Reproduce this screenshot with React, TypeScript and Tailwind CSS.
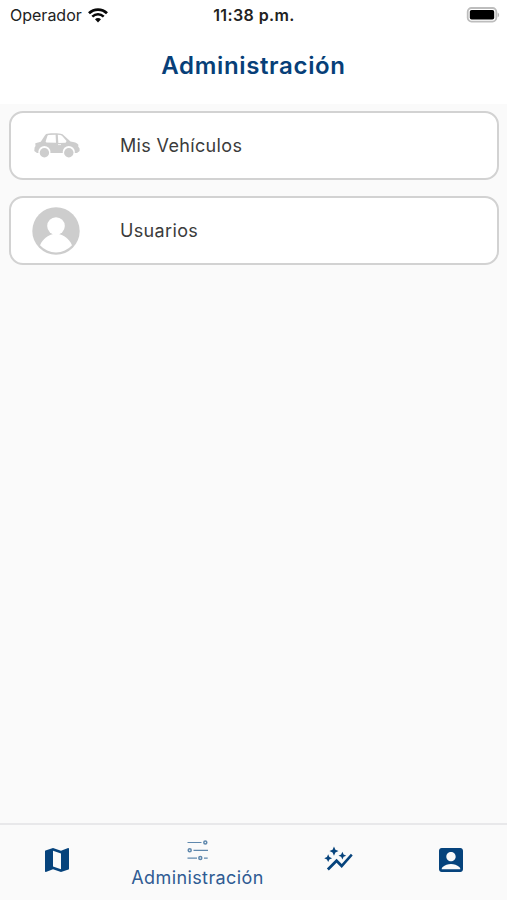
import { MdMap, MdAutoGraph, MdAccountBox } from "react-icons/md";

function WifiIcon() {
  return (
    <svg className="ml-[6px] h-[15px] w-[20px]" viewBox="0 0 20 15" fill="none" stroke="#080808">
      <path d="M1 5.3C6 .3 14 .3 19 5.3" strokeWidth="2.7" />
      <path d="M4.3 8.7c3.3-3.2 8.1-3.2 11.4 0" strokeWidth="2.5" />
      <path d="M10 14.4l-3-3.1c1.7-1.6 4.3-1.6 6 0z" fill="#080808" stroke="none" />
    </svg>
  );
}

function BatteryIcon() {
  return (
    <svg className="h-[16px] w-[34px]" viewBox="0 0 34 16">
      <rect x="1.7" y="1" width="28.6" height="13.6" rx="3.8" fill="#fff" stroke="#bdbdbd" strokeWidth="1.8" />
      <rect x="3.8" y="3" width="24.4" height="9.6" rx="1.8" fill="#000" />
      <path d="M31.6 5.4c2 .8 2 4 0 4.8z" fill="#b9b9b9" />
    </svg>
  );
}

function CarIcon() {
  return (
    <svg className="h-[25px] w-[46px]" viewBox="0 0 46 25">
      <path
        d="M1.3 10.2L6.8 8.8 11.2 2Q12 .8 13.5.7C19 0 25 .1 28.5 1.2L36.5 8.4C40 8.8 43.2 9.7 44.4 11.7L44.2 13.6 45.6 15.5V18L43 20H3L.3 18 .6 14.5 1.5 13z"
        fill="#cdcdcd"
      />
      <path d="M11.6 8.6l1.7-5.4q.3-1 1.3-1.1l7-.3.4 7.9-9.6-.2z" fill="#fff" />
      <path d="M23.8 1.8q2.8 0 4.2.9l4.6 5.2-1 1.9-7.3.2z" fill="#fff" />
      <path d="M24 11.6h3" stroke="#fff" strokeWidth=".8" />
      <circle cx="10.4" cy="19" r="6.1" fill="#fff" />
      <circle cx="34.8" cy="19" r="6.1" fill="#fff" />
      <circle cx="10.4" cy="19.7" r="4.7" fill="#cdcdcd" />
      <circle cx="34.8" cy="19.7" r="4.7" fill="#cdcdcd" />
    </svg>
  );
}

function UserIcon() {
  return (
    <svg className="h-[48px] w-[48px]" viewBox="0 0 48 48">
      <circle cx="24" cy="24" r="23.7" fill="#cdcdcd" />
      <path d="M8 38.3C11 31.5 16.5 28.2 21.3 27.1h5.4C31.5 28.2 37 31.5 40 38.3A21.6 21.6 0 0 1 8 38.3z" fill="#fff" />
      <circle cx="24" cy="19" r="8.8" fill="#fff" />
    </svg>
  );
}

function SlidersIcon() {
  return (
    <svg className="h-[22px] w-[22px]" viewBox="0 0 22 22" fill="none" stroke="#5f88ad" strokeWidth="1.2">
      <path d="M.5 3.5h14M6.5 11.3h14.5M.5 19.1h9.5M17 19.1h3.7" />
      <g strokeWidth="1.5">
        <circle cx="18.3" cy="3.5" r="1.5" />
        <circle cx="2.7" cy="11.3" r="1.5" />
        <circle cx="13.3" cy="19.1" r="1.5" />
      </g>
    </svg>
  );
}

export default function App() {
  return (
    <div className="flex h-[900px] w-[507px] flex-col overflow-hidden bg-[#fafafa] font-['Inter','Liberation_Sans',sans-serif]">
      <header className="h-[104px] bg-white">
        <div className="grid h-[30px] grid-cols-3 items-center pr-[7px] pl-[8px] text-[#222]">
          <div className="flex items-center pl-[2px]">
            <span className="text-[16px] leading-[30px]">Operador</span>
            <WifiIcon />
          </div>
          <span className="text-center text-[16px] leading-[30px] font-semibold tracking-[0.4px] whitespace-nowrap">
            11:38 p.m.
          </span>
          <div className="flex justify-end pb-px">
            <BatteryIcon />
          </div>
        </div>
        <h1 className="mt-[18px] text-center text-[24px] leading-[36px] font-semibold tracking-[0.65px] text-[#073f78]">
          Administración
        </h1>
      </header>
      <main className="flex flex-1 flex-col gap-[16px] pt-[7px] pr-[8px] pl-[9px]">
        <div className="flex h-[69px] items-center rounded-[14px] border-2 border-[#d2d2d2] bg-white">
          <div className="ml-[21px] flex w-[50px] justify-center">
            <CarIcon />
          </div>
          <span className="ml-[38px] text-[18px] tracking-[0.35px] text-[#3b3b3b]">Mis Vehículos</span>
        </div>
        <div className="flex h-[69px] items-center rounded-[14px] border-2 border-[#d2d2d2] bg-white">
          <div className="ml-[20px] flex w-[50px] justify-center">
            <UserIcon />
          </div>
          <span className="ml-[39px] text-[18px] tracking-[0.35px] text-[#3b3b3b]">Usuarios</span>
        </div>
      </main>
      <nav className="grid h-[77px] grid-cols-[113px_169px_112px_113px] border-t-2 border-[#e8e8ea] text-[#06437c]">
        <div className="flex justify-center pt-[19px]">
          <MdMap size={32} />
        </div>
        <div className="flex flex-col items-center pt-[14px]">
          <SlidersIcon />
          <span className="mt-[4px] text-[18px] leading-[26px] tracking-[0.4px] text-[#2f5b93]">Administración</span>
        </div>
        <div className="flex justify-center pt-[19px]">
          <MdAutoGraph size={31} />
        </div>
        <div className="flex justify-center pt-[19px]">
          <MdAccountBox size={32} />
        </div>
      </nav>
    </div>
  );
}
